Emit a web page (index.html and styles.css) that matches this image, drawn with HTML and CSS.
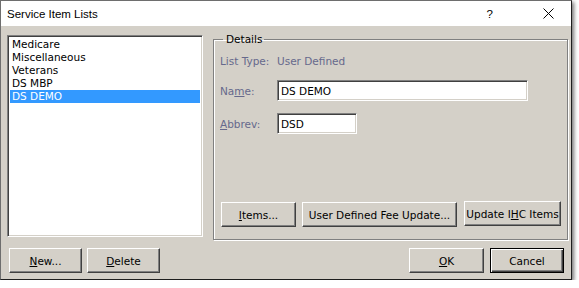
FILE: index.html
```html
<!DOCTYPE html>
<html lang="en">
<head>
    <meta charset="UTF-8">
    <title>Service Item Lists</title>
    <link rel="stylesheet" href="styles.css">
</head>
<body>
    <div class="window">
        <div class="titlebar">
            <span class="title">Service Item Lists</span>
            <span class="help">?</span>
            <svg class="close" width="11" height="11" viewBox="0 0 11 11">
                <path d="M0.5 0.5 L10.5 10.5 M10.5 0.5 L0.5 10.5" stroke="#000" stroke-width="1" fill="none"/>
            </svg>
        </div>
        <div class="dialog">
            <div class="top">
                <ul class="list">
                    <li>Medicare</li>
                    <li>Miscellaneous</li>
                    <li>Veterans</li>
                    <li>DS MBP</li>
                    <li class="selected">DS DEMO</li>
                </ul>
                <fieldset class="details">
                    <legend>Details</legend>
                    <div class="row info">
                        <span class="lbl">List Type:</span>
                        <span>User Defined</span>
                    </div>
                    <div class="row field-row">
                        <label class="lbl" for="name">Na<u>m</u>e:</label>
                        <input class="field name" id="name" type="text" value="DS DEMO">
                    </div>
                    <div class="row field-row abbrev-row">
                        <label class="lbl" for="abbrev"><u>A</u>bbrev:</label>
                        <input class="field abbrev" id="abbrev" type="text" value="DSD">
                    </div>
                    <div class="actions">
                        <button class="btn items-btn"><u>I</u>tems...</button>
                        <button class="btn fee-btn">User Defined Fee Update...</button>
                        <button class="btn ihc-btn">Update I<u>H</u>C Items</button>
                    </div>
                </fieldset>
            </div>
            <div class="bottom">
                <div class="btn-group">
                    <button class="btn small-btn"><u>N</u>ew...</button>
                    <button class="btn small-btn"><u>D</u>elete</button>
                </div>
                <div class="btn-group">
                    <button class="btn ok-btn"><u>O</u>K</button>
                    <button class="btn default-btn">Cancel</button>
                </div>
            </div>
        </div>
    </div>
</body>
</html>
```

FILE: styles.css
```css
* {
    box-sizing: border-box;
}

body {
    margin: 0;
    padding: 0;
    background-color: #fff;
    font-family: "DejaVu Sans", Verdana, sans-serif;
    font-size: 10.5px;
    color: #000;
}

.window {
    width: 572px;
    height: 280px;
    border: 1px solid #6e6e6e;
    border-right-color: #1e1e1e;
    border-bottom-color: #1e1e1e;
    box-shadow: 2px 2px 4px rgba(0, 0, 0, 0.55);
    display: flex;
    flex-direction: column;
}

/* title bar */
.titlebar {
    height: 25px;
    background-color: #fff;
    display: flex;
    align-items: center;
    padding-left: 6px;
    font-family: "Liberation Sans", Arial, sans-serif;
    font-size: 11.5px;
}

.title {
    flex: 1;
}

.help {
    margin-right: 50px;
}

.close {
    margin-right: 17px;
}

.dialog {
    flex: 1;
    background-color: #d4d0c8;
    padding: 7px 4px 0 6px;
}

.top {
    display: flex;
    align-items: flex-start;
}

/* list box */
.list {
    flex-shrink: 0;
    list-style: none;
    margin: 2px 0 0 0;
    width: 196px;
    height: 202px;
    background-color: #fff;
    border: 1px solid;
    border-color: #808080 #fff #fff #808080;
    box-shadow: inset 1px 1px #404040, inset -1px -1px #d4d0c8;
    padding: 2px;
}

.list li {
    height: 13px;
    line-height: 13px;
    padding-left: 2px;
}

.list .selected {
    background-color: #3399ff;
    color: #fff;
}

/* details group */
.details {
    flex-shrink: 0;
    margin: 0 0 0 10px;
    width: 354px;
    height: 207px;
    padding: 0 6px;
    border: 1px solid #808080;
    box-shadow: inset 1px 1px #fff, 1px 1px #fff;
}

.details legend {
    margin-left: 3px;
    padding: 0 2px 0 3px;
    line-height: 13px;
}

.row {
    display: flex;
    align-items: center;
}

.info {
    margin-top: 8px;
    height: 13px;
    color: #66698c;
}

.lbl {
    width: 57px;
    color: #66698c;
}

.field-row {
    margin-top: 13px;
}

.abbrev-row {
    margin-top: 12px;
}

.field {
    height: 21px;
    margin: 0;
    padding: 0 3px;
    font-family: "DejaVu Sans", Verdana, sans-serif;
    font-size: 10.5px;
    color: #000;
    background-color: #fff;
    border: 1px solid;
    border-color: #808080 #fff #fff #808080;
    box-shadow: inset 1px 1px #404040, inset -1px -1px #d4d0c8;
    outline: none;
}

.name {
    width: 251px;
}

.abbrev {
    width: 80px;
}

.actions {
    display: flex;
    align-items: flex-start;
    margin-top: 68px;
    margin-left: 1px;
}

/* buttons */
.btn {
    height: 25px;
    margin: 0;
    padding: 0;
    font-family: "DejaVu Sans", Verdana, sans-serif;
    font-size: 10.5px;
    color: #000;
    background-color: #d4d0c8;
    border: 1px solid;
    border-color: #fff #404040 #404040 #fff;
    box-shadow: inset -1px -1px #808080;
}

.items-btn {
    width: 75px;
}

.fee-btn {
    width: 155px;
    margin-left: 6px;
}

.ihc-btn {
    width: 97px;
    margin-left: 7px;
    margin-top: -1px;
}

.bottom {
    display: flex;
    justify-content: space-between;
    margin-top: 8px;
    padding: 0 3px 0 2px;
}

.btn-group {
    display: flex;
    gap: 5px;
}

.small-btn {
    width: 73px;
}

.ok-btn {
    width: 75px;
    margin-right: 1px;
}

.default-btn {
    width: 74px;
    border-color: #000;
    box-shadow: inset 1px 1px #fff, inset -1px -1px #404040, inset -2px -2px #808080;
}
```
